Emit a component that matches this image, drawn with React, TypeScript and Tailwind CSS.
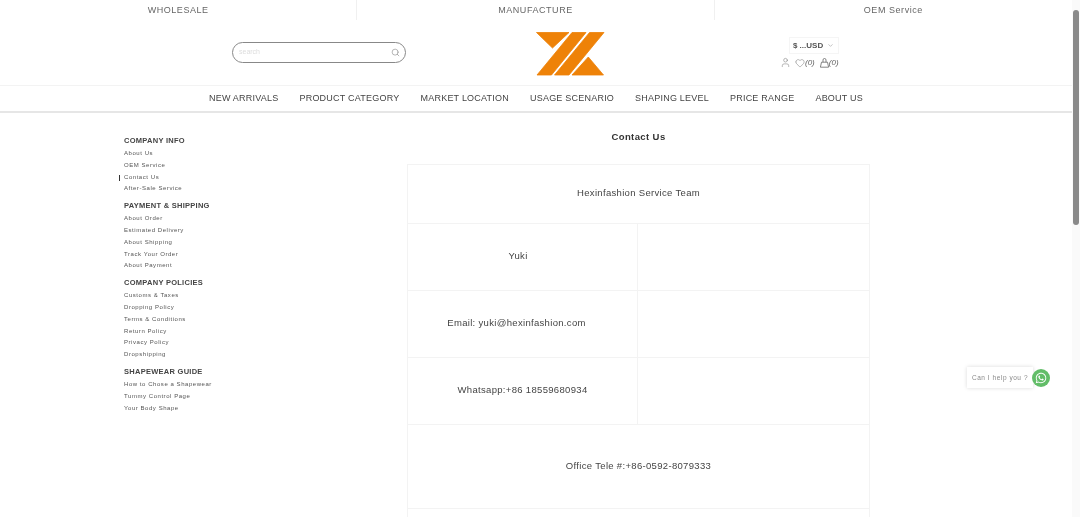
import { ChevronDown, Heart, Search, User } from "lucide-react";
import { FaWhatsapp } from "react-icons/fa";

const topLinks = ["WHOLESALE", "MANUFACTURE", "OEM Service"];

const navLinks = [
  "NEW ARRIVALS",
  "PRODUCT CATEGORY",
  "MARKET LOCATION",
  "USAGE SCENARIO",
  "SHAPING LEVEL",
  "PRICE RANGE",
  "ABOUT US",
];

const sideGroups = [
  {
    title: "COMPANY INFO",
    links: ["About Us", "OEM Service", "Contact Us", "After-Sale Service"],
  },
  {
    title: "PAYMENT & SHIPPING",
    links: [
      "About Order",
      "Estimated Delivery",
      "About Shipping",
      "Track Your Order",
      "About Payment",
    ],
  },
  {
    title: "COMPANY POLICIES",
    links: [
      "Customs & Taxes",
      "Dropping Policy",
      "Terms & Conditions",
      "Return Policy",
      "Privacy Policy",
      "Dropshipping",
    ],
  },
  {
    title: "SHAPEWEAR GUIDE",
    links: ["How to Chose a Shapewear", "Tummy Control Page", "Your Body Shape"],
  },
];

function Logo() {
  return (
    <svg width="70" height="46" viewBox="535 31 70 46" fill="#ee8208" stroke="#ee8208" strokeWidth="0.8" strokeLinejoin="round">
      <polygon points="536.5,32.5 569,32.5 552.5,48" />
      <polygon points="572,32.5 586,32.5 551.5,75 537,75" />
      <polygon points="589.5,32.5 604,32.5 569,75 554.5,75" />
      <polygon points="588.3,57 603.5,75 572,75" />
    </svg>
  );
}

function BagIcon() {
  return (
    <svg width="9" height="10" viewBox="0 0 9 10" fill="none" stroke="#666" strokeWidth="0.8">
      <path d="M1.5 4.2h6L8.6 9.2H.4z" />
      <path d="M3 4.2V2a1.5 1.5 0 0 1 3 0v2.2" />
    </svg>
  );
}

export default function App() {
  return (
    <div className="relative flex h-[517px] w-[1080px] overflow-hidden bg-white font-['Liberation_Sans',Arial,sans-serif] text-[#444]">
      <div className="w-[1072px] shrink-0">
        <div className="grid h-[20px] grid-cols-3 text-[9px] tracking-[0.55px] text-[#666] will-change-transform">
          {topLinks.map((t, i) => (
            <div
              key={t}
              className={`flex items-center justify-center pt-[1px] ${i < 2 ? "border-r border-[#f0f0f0]" : ""}`}
            >
              {t}
            </div>
          ))}
        </div>

        <header className="flex h-[65px] items-start will-change-transform">
          <div className="w-[535px] pl-[232px] pt-[22px]">
            <div className="flex h-[21px] w-[174px] items-center justify-between rounded-full border border-[#888] pl-[6px] pr-[5px]">
              <span className="text-[7px] text-[#ddd]">search</span>
              <Search size={9} strokeWidth={1.4} className="text-[#777]" />
            </div>
          </div>
          <div className="w-[70px] pt-[11px]">
            <Logo />
          </div>
          <div className="ml-[175px] flex flex-col items-end pt-[17px]">
            <div className="flex h-[17px] w-[50px] items-center justify-center gap-[4px] border border-[#f5f5f5] text-[8px] font-bold text-[#555]">
              <span>$ ...USD</span>
              <ChevronDown size={7} className="text-[#999]" />
            </div>
            <div className="mt-[3px] flex items-center text-[8px] italic leading-[10px] text-[#666]">
              <User size={11} strokeWidth={1} className="mr-[4px]" />
              <Heart size={10} strokeWidth={1.1} />
              <span className="mr-[5px]">(0)</span>
              <BagIcon />
              <span>(0)</span>
            </div>
          </div>
        </header>

        <nav className="flex h-[28px] items-center justify-center gap-[21px] border-t border-b-2 border-t-[#f3f3f3] border-b-[#e6e6e6] text-[9px] tracking-[0.22px] text-[#444] will-change-transform">
          {navLinks.map((n) => (
            <span key={n}>{n}</span>
          ))}
        </nav>

        <div className="flex pl-[118px]">
          <aside className="w-[289px] pt-[22px] will-change-transform">
            {sideGroups.map((g) => (
              <div key={g.title} className="mb-[5px] pl-[6px]">
                <h3 className="text-[7.5px] font-bold leading-[11px] tracking-[0.27px] text-[#444]">
                  {g.title}
                </h3>
                <ul className="mt-[2px]">
                  {g.links.map((l) => (
                    <li
                      key={l}
                      className={`relative h-[11.8px] text-[6px] leading-[11.8px] tracking-[0.55px] text-[#555] ${l === "Contact Us" ? "before:absolute before:left-[-5.5px] before:top-[3px] before:h-[6px] before:w-[1.5px] before:bg-[#333]" : ""}`}
                    >
                      {l}
                    </li>
                  ))}
                </ul>
              </div>
            ))}
          </aside>

          <main className="w-[463px] will-change-transform">
            <h1 className="mt-[18px] h-[33px] text-center text-[9.5px] font-bold leading-[12px] tracking-[0.4px] text-[#333]">
              Contact Us
            </h1>
            <table className="w-full table-fixed border-collapse text-center text-[9.5px] tracking-[0.32px] text-[#444]">
              <colgroup>
                <col className="w-[230px]" />
                <col />
              </colgroup>
              <tbody>
                <tr className="h-[59px]">
                  <td colSpan={2} className="border border-[#f3f3f3] pb-[2px]">
                    Hexinfashion Service Team
                  </td>
                </tr>
                <tr className="h-[67px]">
                  <td className="border border-[#f3f3f3] pb-[2px] pr-[9px]">Yuki</td>
                  <td className="border border-[#f3f3f3]"></td>
                </tr>
                <tr className="h-[67px]">
                  <td className="border border-[#f3f3f3] pb-[2px] pr-[12px]">Email: yuki@hexinfashion.com</td>
                  <td className="border border-[#f3f3f3]"></td>
                </tr>
                <tr className="h-[67px]">
                  <td className="border border-[#f3f3f3] pb-[2px]">Whatsapp:+86 18559680934</td>
                  <td className="border border-[#f3f3f3]"></td>
                </tr>
                <tr className="h-[84px]">
                  <td colSpan={2} className="border border-[#f3f3f3]">
                    Office Tele #:+86-0592-8079333
                  </td>
                </tr>
                <tr className="h-[40px]">
                  <td colSpan={2} className="border border-[#f3f3f3]"></td>
                </tr>
              </tbody>
            </table>
          </main>
        </div>
      </div>

      <div className="flex w-[8px] shrink-0 flex-col bg-[#fafafa] pt-[10px]">
        <div className="mx-auto h-[215px] w-[6px] rounded-full bg-[#8a8a8a]"></div>
      </div>

      <div className="absolute left-[967px] top-[367px] flex items-center will-change-transform">
        <div className="flex h-[21px] w-[66px] items-center justify-center bg-white text-[6.5px] tracking-[0.55px] text-[#888] shadow-[0_0_4px_rgba(0,0,0,0.15)]">
          Can I help you ?
        </div>
        <div className="-ml-[1px] flex h-[18px] w-[18px] items-center justify-center rounded-full bg-[#62bd68]">
          <FaWhatsapp size={12} className="text-white" />
        </div>
      </div>
    </div>
  );
}
